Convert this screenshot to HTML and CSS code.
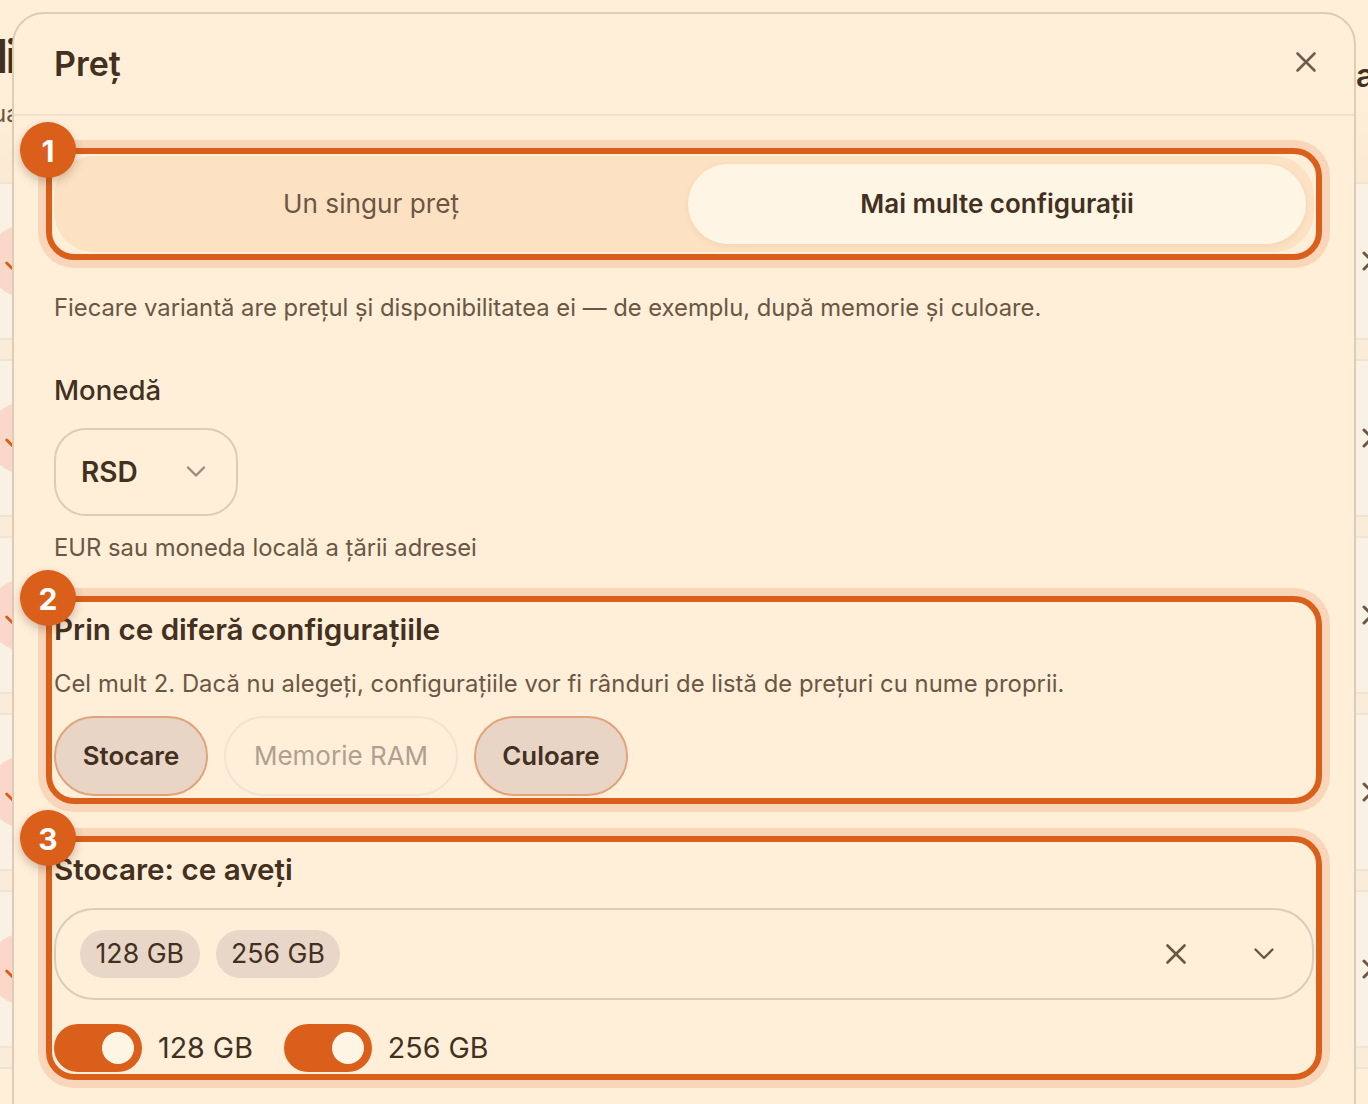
FILE: index.html
```html
<!DOCTYPE html>
<html lang="ro">
<head>
<meta charset="utf-8">
<title>Preț</title>
<link rel="stylesheet" href="styles.css">
</head>
<body>
<div class="page">
  <header class="page-head">
    <div class="head-left">
      <div class="head-title"><span>Detali</span></div>
      <div class="head-sub">ua</div>
    </div>
    <div class="head-right">adă</div>
  </header>
  <div class="row"><span class="avatar"><svg viewBox="0 0 72 72"><path d="M18.7 38 34 53"/></svg></span><svg class="row-x" viewBox="0 0 24 24"><path d="M4 4l16 16M20 4 4 20"/></svg></div>
  <div class="band"></div>
  <div class="row"><span class="avatar"><svg viewBox="0 0 72 72"><path d="M18.7 38 34 53"/></svg></span><svg class="row-x" viewBox="0 0 24 24"><path d="M4 4l16 16M20 4 4 20"/></svg></div>
  <div class="band"></div>
  <div class="row"><span class="avatar"><svg viewBox="0 0 72 72"><path d="M18.7 38 34 53"/></svg></span><svg class="row-x" viewBox="0 0 24 24"><path d="M4 4l16 16M20 4 4 20"/></svg></div>
  <div class="band"></div>
  <div class="row"><span class="avatar"><svg viewBox="0 0 72 72"><path d="M18.7 38 34 53"/></svg></span><svg class="row-x" viewBox="0 0 24 24"><path d="M4 4l16 16M20 4 4 20"/></svg></div>
  <div class="band"></div>
  <div class="row"><span class="avatar"><svg viewBox="0 0 72 72"><path d="M18.7 38 34 53"/></svg></span><svg class="row-x" viewBox="0 0 24 24"><path d="M4 4l16 16M20 4 4 20"/></svg></div>
  <div class="band"></div>
</div>

<section class="modal">
  <header class="modal-head">
    <h2 class="modal-title">Preț</h2>
    <svg class="icon-close" viewBox="0 0 24 24"><path d="M3.5 3.5l17 17M20.5 3.5l-17 17"/></svg>
  </header>
  <div class="modal-body">
    <div class="spot">
      <span class="badge">1</span>
      <div class="segmented">
        <div class="seg">Un singur preț</div>
        <div class="seg seg-active">Mai multe configurații</div>
      </div>
    </div>
    <p class="help help-first">Fiecare variantă are prețul și disponibilitatea ei — de exemplu, după memorie și culoare.</p>

    <div class="label">Monedă</div>
    <div class="select">
      <span class="select-value">RSD</span>
      <svg class="chev chev-soft" viewBox="0 0 20 20"><path d="M2 5.5l8 8 8-8"/></svg>
    </div>
    <p class="help help-hint">EUR sau moneda locală a țării adresei</p>

    <div class="spot spot-2">
      <span class="badge">2</span>
      <h3 class="sec-title">Prin ce diferă configurațiile</h3>
      <p class="help help-desc">Cel mult 2. Dacă nu alegeți, configurațiile vor fi rânduri de listă de prețuri cu nume proprii.</p>
      <div class="pills">
        <span class="pill pill-on">Stocare</span>
        <span class="pill pill-off">Memorie RAM</span>
        <span class="pill pill-on">Culoare</span>
      </div>
    </div>

    <div class="spot spot-3">
      <span class="badge">3</span>
      <h3 class="sec-title">Stocare: ce aveți</h3>
      <div class="multi">
        <span class="chip">128 GB</span>
        <span class="chip">256 GB</span>
        <svg class="icon-clear" viewBox="0 0 20 20"><path d="M1.5 1.5l17 17M18.5 1.5l-17 17"/></svg>
        <svg class="chev chev-dark" viewBox="0 0 20 20"><path d="M1.5 5.5l8.5 8.5 8.5-8.5"/></svg>
      </div>
      <div class="toggles">
        <div class="toggle-item"><span class="toggle"><span class="knob"></span></span><span class="toggle-label">128 GB</span></div>
        <div class="toggle-item"><span class="toggle"><span class="knob"></span></span><span class="toggle-label">256 GB</span></div>
      </div>
    </div>
  </div>
</section>
</body>
</html>
```
FILE: styles.css
```css
* { box-sizing: border-box; }
html, body { margin: 0; height: 100%; }
body {
  width: 1368px;
  height: 1104px;
  overflow: hidden;
  position: relative;
  background: #ffefd9;
  font-family: Inter, "Liberation Sans", sans-serif;
  color: #43301f;
}

/* Page behind the dialog */
.page { height: 1104px; overflow: hidden; }
.page-head {
  height: 184px;
  display: flex;
  justify-content: space-between;
  background: linear-gradient(#ffefd9 40%, #fbe9d3);
  border-bottom: 2px solid #efe3d2;
}
.head-left { width: 12px; }
.head-title { display: flex; justify-content: flex-end; height: 84px; padding-top: 32px; margin-right: -3px; font-size: 46px; line-height: 48px; font-weight: 600; letter-spacing: -2.5px; white-space: nowrap; }
.head-title span { flex: none; }
.head-sub { font-size: 24px; line-height: 28px; color: #6b5643; margin: 16px 0 0 -8px; white-space: nowrap; }
.head-right { width: 12px; padding-top: 56px; font-size: 32px; line-height: 40px; font-weight: 600; white-space: nowrap; overflow: hidden; }
.row {
  height: 154px;
  background: #f9f1e4;
  display: flex;
  align-items: center;
  justify-content: space-between;
}
.band {
  height: 23px;
  background: #fbecd9;
  border-top: 2px solid #efe3d2;
  border-bottom: 2px solid #efe3d2;
}
.avatar { display: block; flex: none; width: 72px; height: 72px; margin-left: -12px; border-radius: 50%; background: #fad7c8; }
.avatar svg { display: block; width: 72px; height: 72px; fill: none; stroke: #d95f1a; stroke-width: 3; stroke-linecap: round; }
.row-x { flex: none; width: 24px; height: 24px; margin-right: -16px; fill: none; stroke: #6b5643; stroke-width: 3; stroke-linecap: round; }

/* Dialog */
.modal {
  position: absolute;
  left: 12px;
  right: 12px;
  top: 12px;
  bottom: -40px;
  background: #ffefd9;
  border: 2px solid #dccdb7;
  border-radius: 32px;
}
.modal-head {
  height: 102px;
  padding: 0 36px 0 40px;
  display: flex;
  align-items: center;
  justify-content: space-between;
  border-bottom: 2px solid #f0e1cc;
}
.modal-title { margin: 0; font-size: 34px; line-height: 44px; font-weight: 600; color: #43301f; }
.icon-close { width: 24px; height: 24px; margin-bottom: 4px; fill: none; stroke: #6f5d4b; stroke-width: 2.6; stroke-linecap: round; }
.modal-body { padding: 40px 40px 0; }

/* Tour highlight */
.spot { position: relative; }
.spot::after {
  content: "";
  position: absolute;
  inset: -8px;
  border: 6px solid #d95f1a;
  border-radius: 28px;
  box-shadow: 0 0 0 8px #f9d5b9;
  pointer-events: none;
}
.badge {
  position: absolute;
  left: -34px;
  top: -34px;
  z-index: 2;
  width: 56px;
  height: 56px;
  border-radius: 50%;
  background: #d95f1a;
  color: #fff;
  font-size: 30px;
  font-weight: 700;
  line-height: 58px;
  text-align: center;
  box-shadow: 0 4px 10px rgba(90, 50, 20, .28);
}
.spot-2 { margin-top: 36px; }
.spot-3 { margin-top: 48px; }

/* Segmented control */
.segmented {
  display: flex;
  gap: 8px;
  height: 96px;
  padding: 8px;
  border-radius: 40px;
  background: #fce2c2;
}
.seg {
  flex: 1 1 0;
  min-width: 0;
  display: flex;
  align-items: center;
  justify-content: center;
  padding-bottom: 2px;
  font-size: 26.2px;
  color: #6b5643;
  border-radius: 40px;
}
.seg-active {
  background: #fff5e4;
  color: #43301f;
  font-size: 26px;
  font-weight: 600;
  box-shadow: 0 2px 6px rgba(120, 80, 40, .08);
}

/* Text */
.help { margin: 0; font-size: 23.8px; line-height: 40px; color: #6b5643; }
.help-first { margin-top: 36px; }
.help-hint { margin-top: 12px; }
.help-desc { margin-top: 8px; letter-spacing: .05px; }
.label { margin-top: 42px; font-size: 27.5px; line-height: 40px; font-weight: 500; color: #43301f; }
.sec-title { margin: 0; padding-bottom: 2px; font-size: 29.6px; line-height: 50px; font-weight: 600; color: #43301f; }

/* Select */
.select {
  margin-top: 18px;
  width: 184px;
  height: 88px;
  padding: 0 30px 0 25px;
  display: flex;
  align-items: center;
  justify-content: space-between;
  border: 2px solid #d9cdb8;
  border-radius: 32px;
}
.select-value { font-size: 28px; font-weight: 600; }
.chev { width: 20px; height: 20px; fill: none; stroke-linecap: round; stroke-linejoin: round; }
.chev-soft { stroke: #9a8a78; stroke-width: 2.4; }
.chev-dark { stroke: #6b5643; stroke-width: 2.4; }

/* Pills */
.pills { display: flex; gap: 16px; margin-top: 12px; }
.pill {
  height: 80px;
  padding: 0 0 2px;
  display: flex;
  align-items: center;
  justify-content: center;
  border-radius: 40px;
  font-size: 26px;
  border: 2px solid #f0e3d1;
}
.pill-on { width: 154px; background: #e8d5c6; border-color: #e2a27a; font-size: 25.8px; font-weight: 600; color: #43301f; }
.pill-off { width: 234px; color: #b0a08f; }

/* Multi select */
.multi {
  margin-top: 12px;
  height: 92px;
  padding: 0 38px 0 24px;
  display: flex;
  align-items: center;
  gap: 16px;
  border: 2px solid #d9cdb8;
  border-radius: 40px;
}
.chip {
  height: 48px;
  padding: 0 15.5px 2px;
  display: flex;
  align-items: center;
  border-radius: 24px;
  background: #e8d7c8;
  font-size: 26.7px;
  color: #43301f;
}
.icon-clear { width: 20px; height: 20px; margin-left: auto; margin-right: 52px; fill: none; stroke: #6b5643; stroke-width: 2.6; stroke-linecap: round; }

/* Toggles */
.toggles { display: flex; gap: 31px; margin-top: 24px; }
.toggle-item { display: flex; align-items: center; gap: 16px; height: 48px; }
.toggle { display: flex; align-items: center; justify-content: flex-end; width: 88px; height: 48px; padding-right: 8px; border-radius: 24px; background: #d95f1a; }
.knob { width: 32px; height: 32px; border-radius: 50%; background: #fff5e4; }
.toggle-label { font-size: 28.6px; line-height: 48px; color: #43301f; }
```
